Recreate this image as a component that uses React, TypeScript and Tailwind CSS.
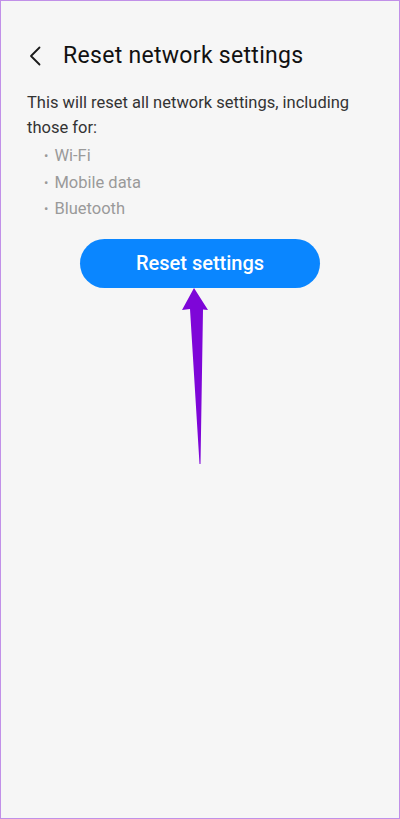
import React from 'react';

const items = ['Wi-Fi', 'Mobile data', 'Bluetooth'];

function BackChevron() {
  return (
    <svg width="14" height="20" viewBox="0 0 14 20" fill="none" className="shrink-0">
      <path d="M11.5 1.5 L3 10 L11.5 18.5" stroke="#1a1a1a" strokeWidth="1.8" strokeLinecap="round" strokeLinejoin="round" />
    </svg>
  );
}

// Purple annotation arrow drawn over the page
function PointerArrow() {
  return (
    <svg
      className="absolute left-0 top-0 pointer-events-none"
      width="400"
      height="819"
      viewBox="0 0 400 819"
    >
      <path
        d="M193 287 L207 309 L202 308.5 L199.5 463 L198.5 463 L189 308 L181 309 Z"
        fill="#7e06d8"
      />
    </svg>
  );
}

export default function App() {
  return (
    <div
      className="relative w-[400px] h-[819px] bg-[#f6f6f6] border border-[#c190e8] overflow-hidden text-[#1c1c1c]"
      style={{ fontFamily: 'Roboto, "Noto Sans", Arial, sans-serif' }}
    >
      {/* Header */}
      <div className="flex items-center gap-[21px] pl-[27px] pt-[42px]">
        <BackChevron />
        <h1 className="text-[23px] leading-[26px] tracking-[0.3px] font-normal text-[#111]">Reset network settings</h1>
      </div>

      {/* Description */}
      <div className="px-[26px] pt-[21px]">
        <p className="text-[16.5px] leading-[25px] text-[#333]">
          This will reset all network settings, including those for:
        </p>
        <ul className="mt-[3px] pl-[17px]">
          {items.map(item => (
            <li key={item} className="flex items-center gap-[6px] text-[16.5px] leading-[26.5px] text-[#9a9a9a]">
              <span className="text-[13px]">•</span>
              <span>{item}</span>
            </li>
          ))}
        </ul>
      </div>

      {/* Action */}
      <div className="flex justify-center pt-[16px]">
        <button className="w-[240px] h-[49px] rounded-full bg-[#0a86ff] text-white text-[20px] font-medium">
          Reset settings
        </button>
      </div>

      <PointerArrow />
    </div>
  );
}
